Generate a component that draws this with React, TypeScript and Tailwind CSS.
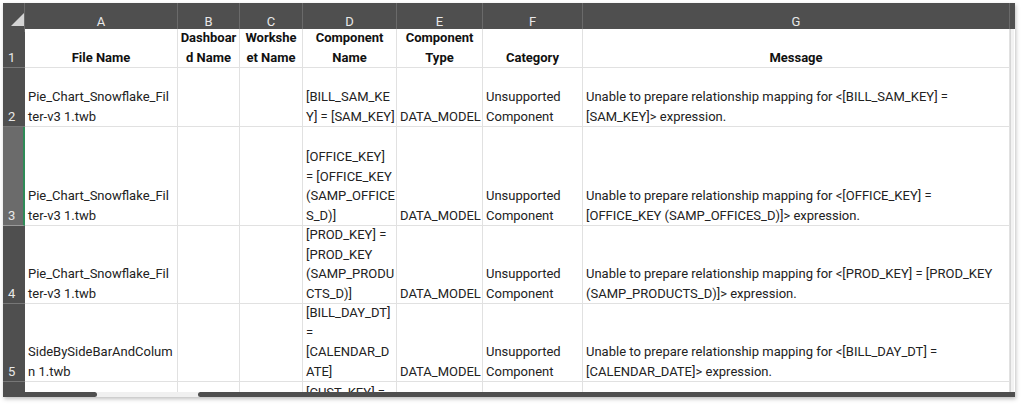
const cols = ["A", "B", "C", "D", "E", "F", "G"];

type Row = { n: number; h: string; header?: boolean; selected?: boolean; cells: string[][] };

const rows: Row[] = [
  {
    n: 1,
    h: "h-[39px]",
    header: true,
    cells: [
      ["File Name"],
      ["Dashboar", "d Name"],
      ["Workshe", "et Name"],
      ["Component", "Name"],
      ["Component", "Type"],
      ["Category"],
      ["Message"],
    ],
  },
  {
    n: 2,
    h: "h-[59px]",
    cells: [
      ["Pie_Chart_Snowflake_Fil", "ter-v3 1.twb"],
      [],
      [],
      ["[BILL_SAM_KE", "Y] = [SAM_KEY]"],
      ["DATA_MODEL"],
      ["Unsupported", "Component"],
      ["Unable to prepare relationship mapping for <[BILL_SAM_KEY] =", "[SAM_KEY]> expression."],
    ],
  },
  {
    n: 3,
    h: "h-[99px]",
    selected: true,
    cells: [
      ["Pie_Chart_Snowflake_Fil", "ter-v3 1.twb"],
      [],
      [],
      ["[OFFICE_KEY]", "= [OFFICE_KEY", "(SAMP_OFFICE", "S_D)]"],
      ["DATA_MODEL"],
      ["Unsupported", "Component"],
      ["Unable to prepare relationship mapping for <[OFFICE_KEY] =", "[OFFICE_KEY (SAMP_OFFICES_D)]> expression."],
    ],
  },
  {
    n: 4,
    h: "h-[78px]",
    cells: [
      ["Pie_Chart_Snowflake_Fil", "ter-v3 1.twb"],
      [],
      [],
      ["[PROD_KEY] =", "[PROD_KEY", "(SAMP_PRODU", "CTS_D)]"],
      ["DATA_MODEL"],
      ["Unsupported", "Component"],
      ["Unable to prepare relationship mapping for <[PROD_KEY] = [PROD_KEY", "(SAMP_PRODUCTS_D)]> expression."],
    ],
  },
  {
    n: 5,
    h: "h-[78px]",
    cells: [
      ["SideBySideBarAndColum", "n 1.twb"],
      [],
      [],
      ["[BILL_DAY_DT]", "=", "[CALENDAR_D", "ATE]"],
      ["DATA_MODEL"],
      ["Unsupported", "Component"],
      ["Unable to prepare relationship mapping for <[BILL_DAY_DT] =", "[CALENDAR_DATE]> expression."],
    ],
  },
];

const gridCols = "grid grid-cols-[22px_153px_62px_63px_94px_86px_100px_427px_4px]";

function Cell({ lines, header }: { lines: string[]; header?: boolean }) {
  return (
    <div
      className={`flex flex-col justify-end overflow-hidden whitespace-nowrap border-r border-b border-[#e1e1e1] px-[3px] ${
        header ? "items-center font-bold text-[#111]" : "text-[#222]"
      }`}
    >
      {lines.map((l, i) => (
        <div key={i} className="leading-[19.5px]">
          {l}
        </div>
      ))}
    </div>
  );
}

export default function App() {
  return (
    <div className="w-[1024px] h-[405px] bg-white pt-[3px] pl-[3px] font-['Roboto','Liberation_Sans',Arial,sans-serif] text-[13px]">
      <div className="w-[1012px] h-[394px] bg-white shadow-[1px_2px_4px_rgba(0,0,0,0.25)] flex flex-col overflow-hidden">
        {/* Column letters */}
        <div className={`${gridCols} h-[26px] bg-[#4f4f4f] text-[#e8e8e8] shrink-0`}>
          <div className="relative border-r border-[#6a6a6a]">
            <svg className="absolute left-[8px] top-[10px]" width="14" height="14" viewBox="0 0 14 14">
              <polygon points="13,0 13,13 0,13" fill="#d4d4d4" />
            </svg>
          </div>
          {cols.map((c) => (
            <div key={c} className="flex items-center justify-center border-r border-[#6a6a6a] pt-[9px]">
              {c}
            </div>
          ))}
          <div />
        </div>

        {/* Rows */}
        {rows.map((r) => (
          <div key={r.n} className={`${gridCols} ${r.h} shrink-0`}>
            <div
              className={`flex items-end pl-[5px] border-b ${
                r.selected
                  ? "bg-[#6b6b6b] border-[#9a9a9a] border-r-2 border-r-[#2e8b57]"
                  : "bg-[#4f4f4f] border-[#777]"
              } text-[#e8e8e8] leading-[19.5px]`}
            >
              {r.n}
            </div>
            {r.cells.map((lines, i) => (
              <Cell key={i} lines={lines} header={r.header} />
            ))}
            <div className="bg-[#f2f2f2] border-l border-[#d6d6d6]" />
          </div>
        ))}

        {/* Partial row 6 */}
        <div className={`${gridCols} h-[10px] shrink-0`}>
          <div className="bg-[#4f4f4f]" />
          <div className="border-r border-[#e1e1e1]" />
          <div className="border-r border-[#e1e1e1]" />
          <div className="border-r border-[#e1e1e1]" />
          <div className="border-r border-[#e1e1e1] overflow-hidden whitespace-nowrap px-[3px] text-[#222] leading-[19.5px] pt-[1px]">
            [CUST_KEY] =
          </div>
          <div className="border-r border-[#e1e1e1]" />
          <div className="border-r border-[#e1e1e1]" />
          <div className="border-r border-[#e1e1e1]" />
          <div className="bg-[#f2f2f2] border-l border-[#d6d6d6]" />
        </div>

        {/* Bottom scroll bar */}
        <div className="flex h-[5px] shrink-0 bg-[#f0f0f0]">
          <div className="w-[94px] bg-[#4f4f4f] rounded-r-[3px]" />
          <div className="w-[101px]" />
          <div className="flex-1 bg-[#4f4f4f] rounded-l-[3px]" />
        </div>
      </div>
    </div>
  );
}
